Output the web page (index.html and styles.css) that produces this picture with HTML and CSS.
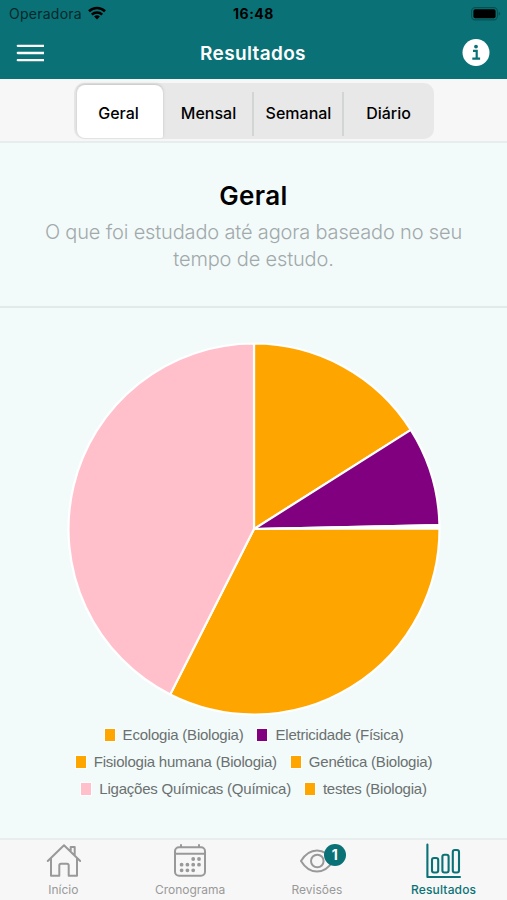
FILE: index.html
```html
<!DOCTYPE html>
<html lang="pt-BR">

<head>
	<meta charset="UTF-8">
	<title>Resultados</title>
	<link rel="stylesheet" href="styles.css">
</head>

<body>
	<header class="header">
		<div class="status-bar">
			<div class="carrier">
				<span class="carrier-name">Operadora</span>
				<svg class="wifi" width="18" height="14" viewBox="0 0 18 14" fill="none" stroke="#000" stroke-width="2.6">
					<path d="M1 5.2a11.6 11.6 0 0 1 16 0" />
					<path d="M3.8 8.6a7.6 7.6 0 0 1 10.4 0" />
					<path d="M9 13.6l-2.9-3a4.2 4.2 0 0 1 5.8 0z" fill="#000" stroke="none" />
				</svg>
			</div>
			<span class="clock">16:48</span>
			<svg class="battery" width="30" height="14" viewBox="0 0 30 14">
				<rect x=".6" y=".6" width="25.8" height="12.3" rx="3.6" fill="none" stroke="#075052" stroke-width="1.1" />
				<rect x="2.4" y="2.3" width="22.2" height="8.9" rx="1.8" />
				<path d="M27.7 4.8c2 .7 2 3.2 0 3.9z" fill="#075052" />
			</svg>
		</div>
		<nav class="nav">
			<svg class="menu" width="29" height="19" viewBox="0 0 29 19" stroke="#fff" stroke-width="2.3" stroke-linecap="round">
				<path d="M2.8 1.8h26M2.8 9h26M2.8 16.2h26" />
			</svg>
			<h1 class="title">Resultados</h1>
			<svg class="info" width="28" height="28" viewBox="0 0 28 28">
				<circle cx="14" cy="13.5" r="13.5" fill="#fff" />
				<circle cx="14" cy="7.6" r="1.9" fill="#0a7276" />
				<path d="M11 11.9h3.7v7.6M10.3 19.7h7.8" fill="none" stroke="#0a7276" stroke-width="2.2" />
			</svg>
		</nav>
	</header>

	<div class="segment-bar">
		<div class="segment">
			<button type="button" class="active">Geral</button>
			<button type="button">Mensal</button>
			<button type="button">Semanal</button>
			<button type="button">Diário</button>
		</div>
	</div>

	<section class="intro">
		<h2>Geral</h2>
		<p>O que foi estudado até agora baseado no seu<br>tempo de estudo.</p>
	</section>

	<main class="chart">
		<svg class="pie" width="374" height="374" viewBox="-187 -187 374 374" stroke="#fff" stroke-width="2.2" stroke-linejoin="bevel">
			<path d="M0 0V-185.5A185.5 185.5 0 0 1 156.8 -99.1Z" fill="orange" />
			<path d="M0 0L156.8 -99.1A185.5 185.5 0 0 1 185.45 -4Z" fill="purple" />
			<path d="M0 0L185.45 -4A185.5 185.5 0 0 1 185.5 -2Z" fill="orange" />
			<path d="M0 0L185.5 -2A185.5 185.5 0 0 1 185.5 -.5Z" fill="orange" />
			<path d="M0 0L185.5 -.5A185.5 185.5 0 0 1 -83.8 165.5Z" fill="orange" />
			<path d="M0 0L-83.8 165.5A185.5 185.5 0 0 1 0 -185.5Z" fill="pink" />
		</svg>
		<div class="legend">
			<div class="legend-row">
				<span class="item"><i class="swatch biologia"></i>Ecologia (Biologia)</span>
				<span class="item"><i class="swatch fisica"></i>Eletricidade (Física)</span>
			</div>
			<div class="legend-row">
				<span class="item"><i class="swatch biologia"></i>Fisiologia humana (Biologia)</span>
				<span class="item"><i class="swatch biologia"></i>Genética (Biologia)</span>
			</div>
			<div class="legend-row">
				<span class="item"><i class="swatch quimica"></i>Ligações Químicas (Química)</span>
				<span class="item"><i class="swatch biologia"></i>testes (Biologia)</span>
			</div>
		</div>
	</main>

	<footer class="tabs">
		<a class="tab">
			<svg width="36" height="36" viewBox="-1 0 36 36" fill="none" stroke="currentColor" stroke-width="2" stroke-linecap="round" stroke-linejoin="round">
				<path d="M1.8 18L18 2.3 34.2 18M5 15.5V32.8h8.3V22.5q0-1.7 1.7-1.7h6q1.7 0 1.7 1.7v10.3H31V15.5M24.7 7.5V4h4v8" />
			</svg>
			<span>Início</span>
		</a>
		<a class="tab">
			<svg width="36" height="36" viewBox="0 0 36 36" fill="none" stroke="currentColor" stroke-width="2" stroke-linecap="round">
				<rect x="3" y="4.2" width="30" height="28.6" rx="4" />
				<path d="M3 10.7h30M9 2v2M27 2v2" />
				<path d="M21.2 16h.01M27 16h.01M9.6 21.7h.01M15.4 21.7h.01M21.2 21.7h.01M27 21.7h.01M9.6 27.3h.01M15.4 27.3h.01M21.2 27.3h.01" stroke-width="3.8" />
			</svg>
			<span>Cronograma</span>
		</a>
		<a class="tab">
			<svg width="36" height="36" viewBox="0 0 36 36" fill="none" stroke="currentColor" stroke-width="2">
				<path d="M2 18C10.5 4 25.5 4 34 18C25.5 32 10.5 32 2 18Z" />
				<circle cx="18.3" cy="18" r="6.3" />
			</svg>
			<b class="badge">1</b>
			<span>Revisões</span>
		</a>
		<a class="tab active">
			<svg width="36" height="36" viewBox="0 0 36 36" fill="none" stroke="currentColor" stroke-width="2.1" stroke-linecap="round" stroke-linejoin="round">
				<path d="M1.4 1.5v32.5h32.6" />
				<rect x="6" y="15" width="6.2" height="14.5" rx="2" />
				<rect x="16.4" y="11.8" width="6.2" height="17.7" rx="2" />
				<rect x="26.8" y="7" width="6.2" height="22.5" rx="2" />
			</svg>
			<span>Resultados</span>
		</a>
	</footer>
</body>

</html>
```
FILE: styles.css
```css
* {
	box-sizing: border-box;
}

body {
	margin: 0;
	height: 900px;
	display: flex;
	flex-direction: column;
	font-family: Inter, sans-serif;
	background-color: #f2fbfa;
	color: #000;
	overflow: hidden;
}

svg {
	display: block;
	flex-shrink: 0;
}

.header {
	height: 79px;
	background-color: #0a7276;
}

.status-bar {
	height: 27px;
	padding: 0 6px 0 9px;
	display: grid;
	grid-template-columns: 1fr auto 1fr;
	align-items: center;
	font-size: 14px;
}

.carrier {
	display: flex;
	align-items: center;
	gap: 6px;
	color: #06282a;
}

.carrier-name {
	letter-spacing: 0.25px;
}

.wifi {
	margin-top: -2px;
}

.clock {
	padding-right: 3px;
	font-weight: 700;
	letter-spacing: 0.5px;
}

.battery {
	justify-self: end;
}

.nav {
	height: 52px;
	padding: 0 17px 0 15px;
	display: flex;
	align-items: center;
	justify-content: space-between;
}

.title {
	margin: 0;
	font-size: 19px;
	font-weight: 600;
	letter-spacing: 0.35px;
	color: #fff;
}

.segment-bar {
	height: 64px;
	padding-top: 4px;
	display: flex;
	justify-content: center;
	align-items: flex-start;
	background-color: #f7f7f7;
	border-bottom: 2px solid #e6eeed;
}

.segment {
	width: 360px;
	height: 56px;
	padding: 2px 0 1px;
	display: flex;
	background-color: #e8e8e8;
	border-radius: 10px;
}

.segment button {
	flex: 1;
	padding: 2px 0 0;
	border: 0;
	background: linear-gradient(#d2d5d6, #d2d5d6) right 7px / 2px 44px no-repeat;
	font-family: inherit;
	font-size: 16px;
	font-weight: 500;
	color: #000;
}

.segment button:last-child {
	background: none;
}

.segment .active {
	flex: 0 0 86px;
	margin: 0 1px 0 3px;
	padding-right: 2px;
	background: #fff;
	border-radius: 8px 8px 2px 8px;
	box-shadow: 0 -1px 3px #bfc2c6;
}

.intro {
	height: 165px;
	padding-top: 35px;
	text-align: center;
	border-bottom: 2px solid #e1e9e9;
}

.intro h2 {
	margin: 0;
	font-size: 26px;
	line-height: 36px;
	font-weight: 600;
	letter-spacing: 0.4px;
}

.intro p {
	margin: 5px 0 0;
	font-size: 20px;
	line-height: 27px;
	font-weight: 300;
	letter-spacing: -0.16px;
	color: #a2a9ab;
}

.chart {
	flex: 1;
	padding-top: 34px;
	display: flex;
	flex-direction: column;
	align-items: center;
}

.legend {
	margin-top: 5px;
	font-family: "Liberation Sans", Arial, sans-serif;
	font-size: 15px;
	line-height: 27px;
	letter-spacing: -0.22px;
	color: #6b7070;
}

.legend-row {
	display: flex;
	justify-content: center;
	gap: 13px;
}

.item {
	display: flex;
	align-items: center;
	white-space: nowrap;
}

.swatch {
	width: 12px;
	height: 14px;
	margin-right: 7px;
	border: 1px solid #fff;
}

.biologia {
	background-color: orange;
}

.fisica {
	background-color: purple;
}

.quimica {
	background-color: pink;
}

.tabs {
	height: 62px;
	padding-top: 3px;
	display: grid;
	grid-template-columns: repeat(4, 1fr);
	background-color: #f7f7f7;
	border-top: 2px solid #e8eeee;
}

.tab {
	position: relative;
	display: flex;
	flex-direction: column;
	align-items: center;
	font-size: 12px;
	line-height: 22px;
	color: #999;
}

.tab.active {
	color: #0a7276;
	font-weight: 500;
	letter-spacing: 0.15px;
}

.badge {
	position: absolute;
	top: 1px;
	left: calc(50% + 7px);
	width: 22px;
	height: 22px;
	border-radius: 50%;
	background-color: #0a7276;
	color: #fff;
	font-size: 14px;
	line-height: 22px;
	text-align: center;
}
```
